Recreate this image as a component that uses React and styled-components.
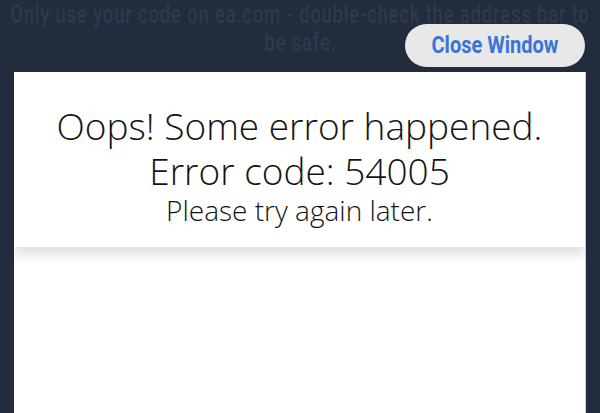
import React from 'react';
import styled, { createGlobalStyle } from 'styled-components';

const GlobalStyle = createGlobalStyle`
  html, body {
    margin: 0;
    padding: 0;
    background-color: #232c3c;
    height: 100%;
    overflow: hidden;
  }
  #root {
    height: 100%;
  }
`;

const Page = styled.div`
  display: flex;
  flex-direction: column;
  height: 413px;
  padding: 0 14px;
  box-sizing: border-box;
`;

const Notice = styled.div`
  display: flex;
  flex-direction: column;
  align-items: center;
  color: #2e3a4d;
  font-family: 'Roboto', 'Liberation Sans', sans-serif;
  font-weight: 500;
  font-size: 25px;
  line-height: 28px;
  letter-spacing: 1px;
  margin: 0 -14px;
  padding-top: 1px;
  white-space: nowrap;
`;

// no condensed family is installed, so squeeze the line horizontally
const NoticeLine = styled.span`
  display: block;
  width: max-content;
  flex-shrink: 0;
  transform: scaleX(0.745);
  transform-origin: center;
`;

const ButtonRow = styled.div`
  display: flex;
  justify-content: flex-end;
  margin-top: -33px;
  margin-bottom: 5px;
  position: relative;
`;

const CloseButton = styled.button`
  background-color: #e8e8e8;
  border: none;
  border-radius: 22px;
  color: #3a74d8;
  font-family: 'Roboto', 'Liberation Sans', sans-serif;
  font-size: 23px;
  font-weight: 700;
  height: 43px;
  width: 180px;
  padding: 0;
  margin-right: 1px;
`;

const ButtonLabel = styled.span`
  display: inline-block;
  transform: scaleX(0.87);
`;

const Panel = styled.div`
  background-color: #fff;
  flex: 1;
  border-right: 1px solid #cfd3d8;
`;

const Header = styled.div`
  box-shadow: 0 8px 10px rgba(0, 0, 0, 0.12);
  padding: 31px 0 20px;
  text-align: center;
  color: #141414;
  font-family: 'Open Sans', sans-serif;
  font-weight: 300;
`;

const Title = styled.h1`
  font-size: 37px;
  font-weight: 300;
  line-height: 45px;
  margin: 0;
`;

const Subtitle = styled.p`
  font-size: 28px;
  line-height: 34px;
  margin: 0;
`;

function App() {
  return (
    <Page>
      <GlobalStyle />
      <Notice>
        <NoticeLine>Only use your code on ea.com - double-check the address bar to</NoticeLine>
        <NoticeLine>be safe.</NoticeLine>
      </Notice>
      <ButtonRow>
        <CloseButton><ButtonLabel>Close Window</ButtonLabel></CloseButton>
      </ButtonRow>
      <Panel>
        <Header>
          <Title>Oops! Some error happened.<br />Error code: 54005</Title>
          <Subtitle>Please try again later.</Subtitle>
        </Header>
      </Panel>
    </Page>
  );
}

export default App;
